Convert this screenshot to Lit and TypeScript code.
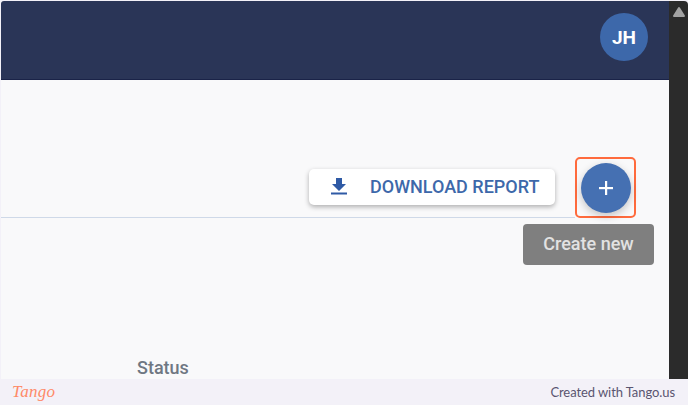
import { LitElement, html, css } from "lit";
import { customElement } from "lit/decorators.js";

@customElement("app-root")
export class AppRoot extends LitElement {
  static styles = css`
    :host {
      display: block;
      width: 688px;
      height: 405px;
      overflow: hidden;
      background: #f3f1f8;
      font-family: Roboto, "Liberation Sans", sans-serif;
    }
    .window {
      height: 379px;
      display: grid;
      grid-template-columns: 1fr 19px;
      padding: 1px 0 0 1px;
      box-sizing: border-box;
    }
    .page {
      position: relative;
      display: flex;
      flex-direction: column;
      background: #f9f9fa;
      overflow: hidden;
    }
    .topbar {
      height: 79px;
      flex: none;
      box-sizing: border-box;
      background: #2a3557;
      border-bottom: 1px solid #1a2348;
      border-top-left-radius: 3px;
      display: flex;
      align-items: flex-start;
      justify-content: flex-end;
      padding: 12px 21px 0 0;
    }
    .avatar {
      width: 48px;
      height: 48px;
      border-radius: 50%;
      background: #3d68aa;
      color: #fff;
      font-size: 19px;
      font-weight: 700;
      display: flex;
      align-items: center;
      justify-content: center;
    }
    .toolbar {
      height: 138px;
      flex: none;
      box-sizing: border-box;
      border-bottom: 1px solid #cfd9e8;
      margin-right: 94px;
      padding: 89px 0 0;
      display: flex;
      justify-content: flex-end;
      align-items: flex-start;
    }
    .download {
      width: 246px;
      height: 36px;
      margin-right: 20px;
      box-sizing: border-box;
      background: #fff;
      border-radius: 5px;
      box-shadow: 0 2px 5px rgba(0, 0, 0, 0.3);
      color: #3d68aa;
      font-size: 18px;
      font-weight: 500;
      display: flex;
      align-items: center;
      padding: 0 0 2px 21px;
      gap: 22px;
      white-space: nowrap;
    }
    .download svg {
      width: 18px;
      height: 18px;
      flex: none;
    }
    .status {
      margin: auto 0 1px 136px;
      font-size: 18px;
      line-height: 20px;
      font-weight: 500;
      color: #6f7782;
    }
    .frame {
      position: absolute;
      left: 574px;
      top: 156px;
      width: 61px;
      height: 61px;
      box-sizing: border-box;
      border: 2px solid #ff6b3d;
      border-radius: 5px;
      display: flex;
      align-items: center;
      justify-content: center;
    }
    .fab {
      width: 50px;
      height: 50px;
      border-radius: 50%;
      background: #4570b2;
      box-shadow: 0 3px 8px rgba(0, 0, 0, 0.22);
      display: flex;
      align-items: center;
      justify-content: center;
    }
    .fab svg {
      width: 16px;
      height: 16px;
    }
    .tooltip {
      position: absolute;
      left: 522px;
      top: 223px;
      width: 131px;
      height: 41px;
      box-sizing: border-box;
      padding-bottom: 2px;
      background: #7f7f7f;
      border-radius: 4px;
      color: #e2e2e2;
      font-size: 18px;
      font-weight: 500;
      display: flex;
      align-items: center;
      justify-content: center;
    }
    .scrollbar {
      background: #2b2b2b;
      display: flex;
      justify-content: center;
      padding-top: 5px;
      border-top-right-radius: 4px;
    }
    .scrollbar svg {
      width: 14px;
      height: 11px;
    }
    .footer {
      height: 26px;
      box-sizing: border-box;
      display: flex;
      align-items: center;
      justify-content: space-between;
      padding: 0 13px 0 12px;
      background: #f3f1f8;
    }
    .logo {
      font-family: "Liberation Serif", serif;
      font-style: italic;
      font-size: 17px;
      color: #ff8a68;
      letter-spacing: 0.3px;
    }
    .credit {
      font-family: Lato, "Noto Sans", sans-serif;
      font-size: 13px;
      letter-spacing: -0.08px;
      color: #5a5570;
    }
  `;

  render() {
    return html`
      <div class="window">
        <div class="page">
          <div class="topbar"><div class="avatar">JH</div></div>
          <div class="toolbar">
            <div class="download">
              <svg viewBox="0 0 18 18" fill="#2f5aa5">
                <path d="M6 1h6v6h4l-7 7-7-7h4z" />
                <rect x="1" y="15.5" width="16" height="2" />
              </svg>
              DOWNLOAD REPORT
            </div>
          </div>
          <div class="status">Status</div>
          <div class="frame">
            <div class="fab">
              <svg viewBox="0 0 16 16" fill="#fff">
                <rect x="7" y="1" width="2.2" height="14" />
                <rect x="1" y="7" width="14" height="2.2" />
              </svg>
            </div>
          </div>
          <div class="tooltip">Create new</div>
        </div>
        <div class="scrollbar">
          <svg viewBox="0 0 14 11" fill="#a3a3a3" stroke="#a3a3a3" stroke-width="2" stroke-linejoin="round">
            <path d="M7 2l5 8H2z" />
          </svg>
        </div>
      </div>
      <div class="footer">
        <span class="logo">Tango</span>
        <span class="credit">Created with Tango.us</span>
      </div>
    `;
  }
}
